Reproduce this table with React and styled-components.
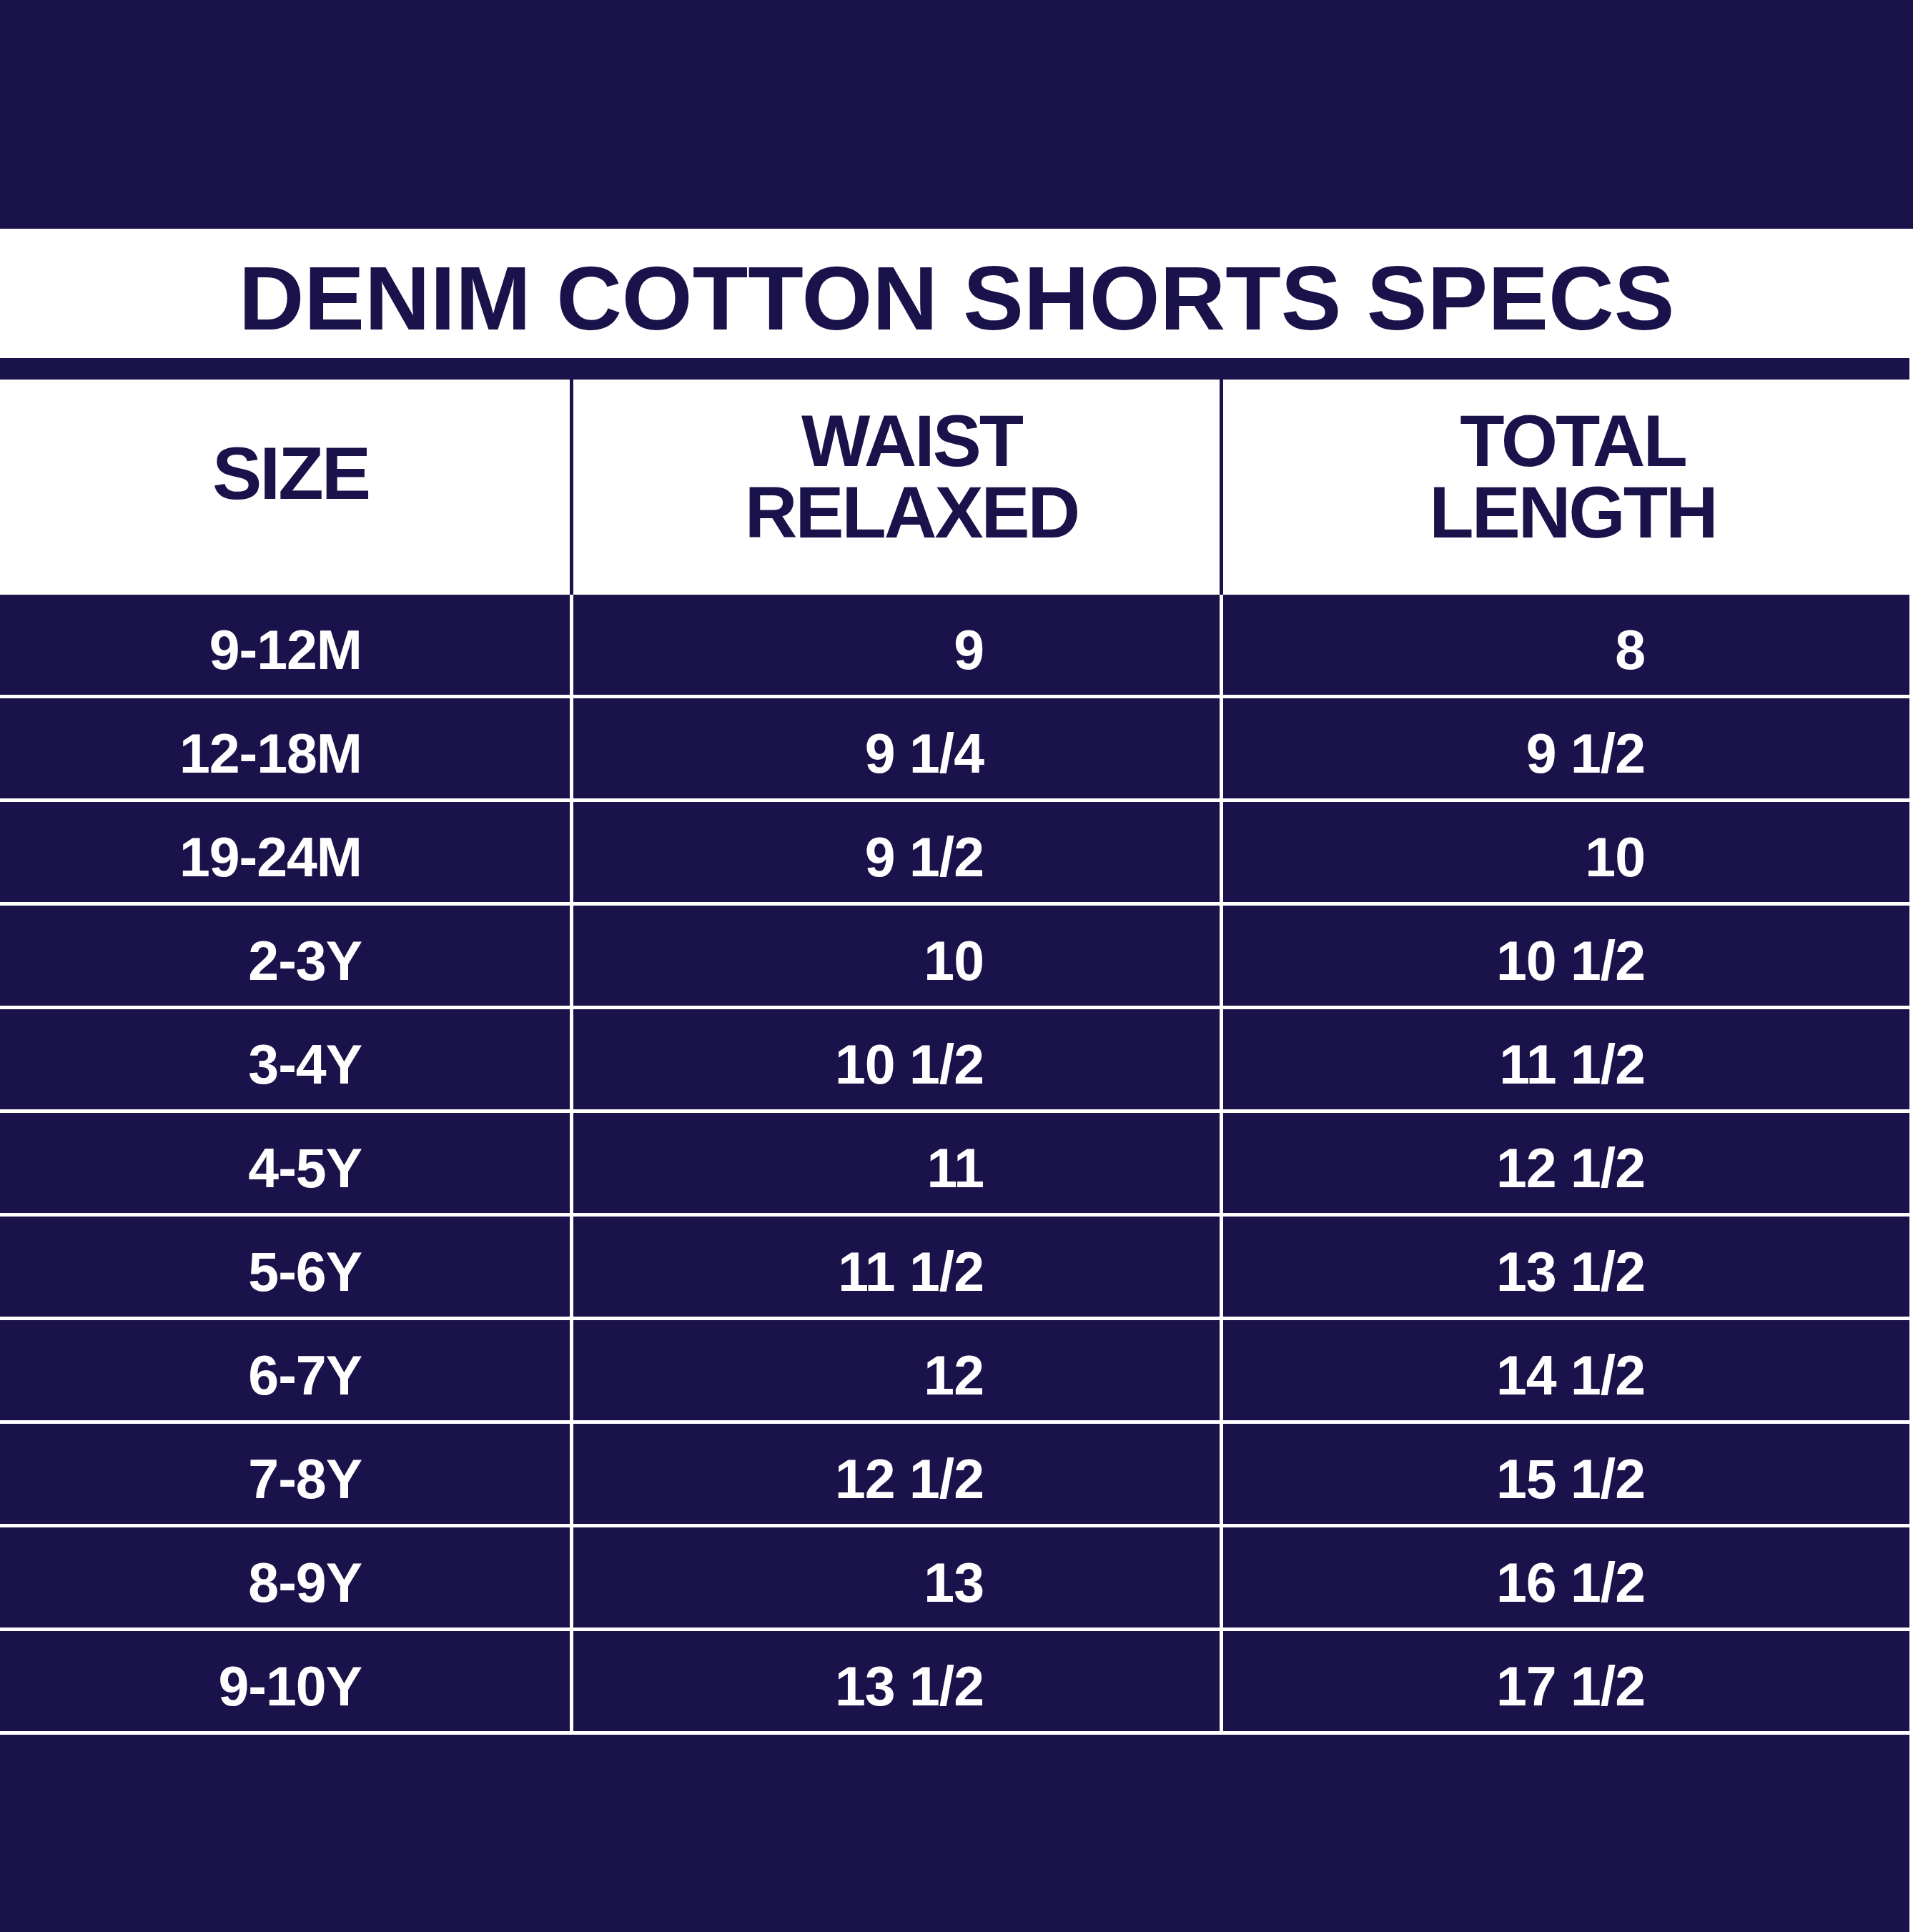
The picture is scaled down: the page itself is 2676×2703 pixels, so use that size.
import React from "react";
import styled, { createGlobalStyle } from "styled-components";

const NAVY = "#1a124a";

const GlobalStyle = createGlobalStyle`
  html, body {
    margin: 0;
    padding: 0;
    background: ${NAVY};
  }
  * { box-sizing: border-box; }
`;

const Page = styled.div`
  width: 2676px;
  height: 2703px;
  display: flex;
  flex-direction: column;
  background: ${NAVY};
  font-family: "Liberation Sans", Arial, sans-serif;
  overflow: hidden;
`;

const TopBand = styled.div`
  height: 320px;
  flex: none;
  background: ${NAVY};
`;

const Sheet = styled.div`
  flex: 1;
  display: flex;
  flex-direction: column;
  background: #ffffff;
  padding-right: 5px;
`;

const TitleBand = styled.div`
  height: 181px;
  display: flex;
  align-items: center;
  justify-content: center;
  padding: 14px 0 0 5px;
  background: #ffffff;
`;

const Title = styled.h1`
  margin: 0;
  font-size: 127px;
  line-height: 1;
  font-weight: 700;
  color: ${NAVY};
  white-space: nowrap;
`;

const Rule = styled.div`
  height: 30px;
  background: ${NAVY};
`;

const Table = styled.div`
  display: grid;
  grid-template-columns: 802px 909px 960px;
  grid-auto-rows: 145px;
  grid-template-rows: 301px;
`;

const HeadCell = styled.div`
  display: flex;
  align-items: center;
  justify-content: center;
  text-align: center;
  background: #ffffff;
  border-right: ${(p) => (p.$last ? "0" : `5px solid ${NAVY}`)};
  padding-left: ${(p) => p.$pl}px;
  padding-bottom: ${(p) => p.$pb}px;
  color: ${NAVY};
  font-weight: 700;
  font-size: ${(p) => p.$fs || 102}px;
  line-height: 100px;
  letter-spacing: -3px;
`;

const HeadLabel = styled.span`
  display: block;
  width: min-content;
  white-space: normal;
`;

const BodyCell = styled.div`
  display: flex;
  align-items: center;
  justify-content: flex-end;
  background: ${NAVY};
  border-right: ${(p) => (p.$last ? "0" : "5px solid #ffffff")};
  border-bottom: 5px solid #ffffff;
  padding-right: ${(p) => p.$pr}px;
  padding-top: 14px;
  color: #ffffff;
  font-weight: 700;
  font-size: 77px;
  line-height: 1;
  letter-spacing: -1px;
  white-space: nowrap;
`;

const BottomBand = styled.div`
  flex: 1;
  background: ${NAVY};
`;

const rows = [
  ["9-12M", "9", "8"],
  ["12-18M", "9 1/4", "9 1/2"],
  ["19-24M", "9 1/2", "10"],
  ["2-3Y", "10", "10 1/2"],
  ["3-4Y", "10 1/2", "11 1/2"],
  ["4-5Y", "11", "12 1/2"],
  ["5-6Y", "11 1/2", "13 1/2"],
  ["6-7Y", "12", "14 1/2"],
  ["7-8Y", "12 1/2", "15 1/2"],
  ["8-9Y", "13", "16 1/2"],
  ["9-10Y", "13 1/2", "17 1/2"],
];

const padRight = [291, 330, 370];

export default function App() {
  return (
    <>
      <GlobalStyle />
      <Page>
        <TopBand />
        <Sheet>
          <TitleBand>
            <Title>DENIM COTTON SHORTS SPECS</Title>
          </TitleBand>
          <Rule />
          <Table>
            <HeadCell $pl={16} $pb={40} $fs={104}>
              <HeadLabel>SIZE</HeadLabel>
            </HeadCell>
            <HeadCell $pl={42} $pb={30}>
              <HeadLabel>WAIST RELAXED</HeadLabel>
            </HeadCell>
            <HeadCell $pl={18} $pb={30} $last>
              <HeadLabel>TOTAL LENGTH</HeadLabel>
            </HeadCell>
            {rows.map((r, i) =>
              r.map((v, j) => (
                <BodyCell key={`${i}-${j}`} $pr={padRight[j]} $last={j === 2}>
                  {v}
                </BodyCell>
              ))
            )}
          </Table>
          <BottomBand />
        </Sheet>
      </Page>
    </>
  );
}
